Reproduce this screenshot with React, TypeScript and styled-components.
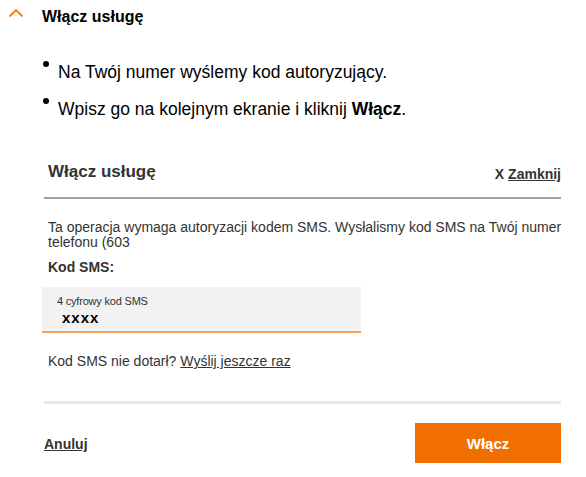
import styled, { createGlobalStyle } from 'styled-components'

const GlobalStyle = createGlobalStyle`
    body {
        margin: 0;
        background: #fff;
        font-family: 'Liberation Sans', Arial, sans-serif;
        color: #000;
    }
`
const Page = styled.div`
    width: 586px;
    height: 477px;
    overflow: hidden;
`
const Header = styled.div`
    display: flex;
    align-items: center;
    height: 20px;
    padding: 7px 0 0 8px;
`
const Chevron = styled.span`
    display: flex;
    width: 16px;
    margin-right: 18px;
    margin-top: -9px;
`
const HeaderTitle = styled.h3`
    margin: 0;
    font-size: 16px;
    font-weight: bold;
    line-height: 20px;
`
const Steps = styled.ul`
    list-style: none;
    margin: 0;
    padding: 35px 0 0 42px;
`
const Step = styled.li`
    position: relative;
    padding-left: 16px;
    font-size: 17.5px;
    line-height: 20px;
    margin-bottom: 17px;
    &::before {
        content: '';
        position: absolute;
        left: 1px;
        top: -1px;
        width: 6px;
        height: 6px;
        border-radius: 50%;
        background: #000;
    }
`
const Modal = styled.section`
    margin: 37px 25px 0 44px;
    color: #333;
`
const ModalHead = styled.div`
    display: flex;
    justify-content: space-between;
    align-items: center;
    padding: 0 0 9px 4px;
    height: 32px;
    border-bottom: 2px solid #a0a0a0;
`
const ModalTitle = styled.h4`
    margin: 0;
    font-size: 17px;
    font-weight: bold;
`
const CloseLink = styled.a`
    font-size: 14px;
    font-weight: bold;
    color: #333;
    margin-top: 4px;
    span {
        text-decoration: underline;
    }
`
const Body = styled.div`
    padding: 21px 0 0 4px;
    font-size: 14px;
    line-height: 15px;
`
const Text = styled.p`
    margin: 0 -10px 0 0;
`
const FieldLabel = styled.div`
    font-weight: bold;
    margin-top: 10px;
`
const Field = styled.div`
    width: 319px;
    height: 46px;
    margin: 12px 0 0 -6px;
    box-sizing: border-box;
    padding: 8px 0 0 15px;
    background: #f2f2f2;
    border-bottom: 2px solid #f7a15e;
`
const FieldHint = styled.div`
    font-size: 11px;
    line-height: 12px;
    letter-spacing: -0.2px;
`
const FieldValue = styled.div`
    font-size: 15px;
    font-weight: bold;
    line-height: 16px;
    color: #000;
    letter-spacing: 1px;
    margin: 3px 0 0 5px;
`
const Resend = styled.p`
    margin: 21px 0 0;
`
const Link = styled.a`
    color: #333;
    text-decoration: underline;
`
const Footer = styled.div`
    margin-top: 32px;
    border-top: 3px solid #e8e8e8;
    display: flex;
    justify-content: space-between;
    align-items: center;
    padding-top: 19px;
`
const Cancel = styled.a`
    font-size: 14px;
    font-weight: bold;
    color: #333;
    text-decoration: underline;
    margin-top: 2px;
`
const Submit = styled.button`
    width: 146px;
    height: 40px;
    border: none;
    background: #f16e00;
    color: #fff;
    font-family: 'Liberation Sans', Arial, sans-serif;
    font-size: 15px;
    font-weight: bold;
    cursor: pointer;
`

const App = () => {
    return (
        <Page>
            <GlobalStyle />
            <Header>
                <Chevron>
                    <svg width="16" height="10" viewBox="0 0 16 10">
                        <path d="M1.5 8.5 L8 2 L14.5 8.5" fill="none" stroke="#ff7900" strokeWidth="1.8" />
                    </svg>
                </Chevron>
                <HeaderTitle>Włącz usługę</HeaderTitle>
            </Header>
            <Steps>
                <Step>Na Twój numer wyślemy kod autoryzujący.</Step>
                <Step>
                    Wpisz go na kolejnym ekranie i kliknij <b>Włącz</b>.
                </Step>
            </Steps>
            <Modal>
                <ModalHead>
                    <ModalTitle>Włącz usługę</ModalTitle>
                    <CloseLink>
                        X <span>Zamknij</span>
                    </CloseLink>
                </ModalHead>
                <Body>
                    <Text>
                        Ta operacja wymaga autoryzacji kodem SMS. Wysłalismy kod SMS na Twój numer
                        telefonu (603
                    </Text>
                    <FieldLabel>Kod SMS:</FieldLabel>
                    <Field>
                        <FieldHint>4 cyfrowy kod SMS</FieldHint>
                        <FieldValue>xxxx</FieldValue>
                    </Field>
                    <Resend>
                        Kod SMS nie dotarł? <Link>Wyślij jeszcze raz</Link>
                    </Resend>
                </Body>
                <Footer>
                    <Cancel>Anuluj</Cancel>
                    <Submit>Włącz</Submit>
                </Footer>
            </Modal>
        </Page>
    )
}

export default App
